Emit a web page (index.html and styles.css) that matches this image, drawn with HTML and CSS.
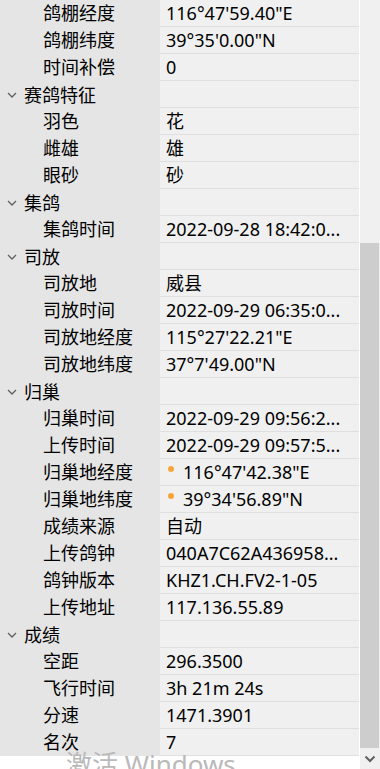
FILE: index.html
```html
<!DOCTYPE html>
<html lang="zh-CN">
<head>
    <meta charset="UTF-8">
    <meta name="viewport" content="width=device-width, initial-scale=1.0">
    <title>赛鸽属性</title>
    <link rel="stylesheet" href="styles.css">
</head>
<body>
    <div class="window">
        <div class="grid">
            <div class="row"><div class="name">鸽棚经度</div><div class="value">116°47'59.40"E</div></div>
            <div class="row"><div class="name">鸽棚纬度</div><div class="value">39°35'0.00"N</div></div>
            <div class="row"><div class="name">时间补偿</div><div class="value">0</div></div>

            <!-- 赛鸽特征 -->
            <div class="row cat"><div class="name"><svg class="chev" width="10" height="6" viewBox="0 0 10 6"><path d="M1 1 L5 5 L9 1"/></svg>赛鸽特征</div><div class="value"></div></div>
            <div class="row"><div class="name">羽色</div><div class="value">花</div></div>
            <div class="row"><div class="name">雌雄</div><div class="value">雄</div></div>
            <div class="row"><div class="name">眼砂</div><div class="value">砂</div></div>

            <!-- 集鸽 -->
            <div class="row cat"><div class="name"><svg class="chev" width="10" height="6" viewBox="0 0 10 6"><path d="M1 1 L5 5 L9 1"/></svg>集鸽</div><div class="value"></div></div>
            <div class="row"><div class="name">集鸽时间</div><div class="value">2022-09-28 18:42:0...</div></div>

            <!-- 司放 -->
            <div class="row cat"><div class="name"><svg class="chev" width="10" height="6" viewBox="0 0 10 6"><path d="M1 1 L5 5 L9 1"/></svg>司放</div><div class="value"></div></div>
            <div class="row"><div class="name">司放地</div><div class="value">威县</div></div>
            <div class="row"><div class="name">司放时间</div><div class="value">2022-09-29 06:35:0...</div></div>
            <div class="row"><div class="name">司放地经度</div><div class="value">115°27'22.21"E</div></div>
            <div class="row"><div class="name">司放地纬度</div><div class="value">37°7'49.00"N</div></div>

            <!-- 归巢 -->
            <div class="row cat"><div class="name"><svg class="chev" width="10" height="6" viewBox="0 0 10 6"><path d="M1 1 L5 5 L9 1"/></svg>归巢</div><div class="value"></div></div>
            <div class="row"><div class="name">归巢时间</div><div class="value">2022-09-29 09:56:2...</div></div>
            <div class="row"><div class="name">上传时间</div><div class="value">2022-09-29 09:57:5...</div></div>
            <div class="row"><div class="name">归巢地经度</div><div class="value"><span class="dot"></span>116°47'42.38"E</div></div>
            <div class="row"><div class="name">归巢地纬度</div><div class="value"><span class="dot"></span>39°34'56.89"N</div></div>
            <div class="row"><div class="name">成绩来源</div><div class="value">自动</div></div>
            <div class="row"><div class="name">上传鸽钟</div><div class="value">040A7C62A436958...</div></div>
            <div class="row"><div class="name">鸽钟版本</div><div class="value">KHZ1.CH.FV2-1-05</div></div>
            <div class="row"><div class="name">上传地址</div><div class="value">117.136.55.89</div></div>

            <!-- 成绩 -->
            <div class="row cat"><div class="name"><svg class="chev" width="10" height="6" viewBox="0 0 10 6"><path d="M1 1 L5 5 L9 1"/></svg>成绩</div><div class="value"></div></div>
            <div class="row"><div class="name">空距</div><div class="value">296.3500</div></div>
            <div class="row"><div class="name">飞行时间</div><div class="value">3h 21m 24s</div></div>
            <div class="row"><div class="name">分速</div><div class="value">1471.3901</div></div>
            <div class="row"><div class="name">名次</div><div class="value">7</div></div>
        </div>

        <div class="scrollbar">
            <div class="track"><div class="thumb"></div></div>
            <div class="arrow"><svg width="12" height="8" viewBox="0 0 12 8"><path d="M1.5 1.5 L6 6 L10.5 1.5"/></svg></div>
        </div>
    </div>

    <div class="watermark">激活 Windows</div>
</body>
</html>
```

FILE: styles.css
```css
/* General */
body {
    margin: 0;
    background: #fff;
    font-family: "Noto Sans", "Noto Sans CJK SC", sans-serif;
    font-size: 18px;
    color: #000;
    overflow: hidden;
}

.window {
    display: flex;
    width: 380px;
    height: 769px;
}

/* Property grid */
.grid {
    width: 359px;
    border-right: 1px solid #fff;
}

.row {
    display: flex;
    height: 27px;
}

.name {
    width: 160px;
    flex-shrink: 0;
    background: #e5e5e5;
    padding-left: 43px;
    box-sizing: border-box;
    line-height: 26px;
    white-space: nowrap;
}

.cat .name {
    display: flex;
    align-items: center;
    padding-left: 7px;
}

.chev {
    margin-right: 7px;
}

.chev path {
    fill: none;
    stroke: #606060;
    stroke-width: 1.3;
}

.value {
    flex: 1;
    background: #f0f0f0;
    border-bottom: 1px solid #dfdfdf;
    padding-left: 6px;
    line-height: 26px;
    white-space: nowrap;
    overflow: hidden;
}

.dot {
    display: inline-block;
    width: 6px;
    height: 6px;
    border-radius: 50%;
    background: #f9a53a;
    margin: 0 9px 0 2px;
    vertical-align: 7px;
}

/* Scrollbar */
.scrollbar {
    width: 20px;
    background: #f0f0f0;
    display: flex;
    flex-direction: column;
}

.track {
    flex: 1;
}

.thumb {
    margin-top: 243px;
    margin-right: 1px;
    height: 505px;
    background: #cdcdcd;
}

.arrow {
    height: 21px;
    display: flex;
    justify-content: center;
    align-items: center;
}

.arrow path {
    fill: none;
    stroke: #606060;
    stroke-width: 2;
}

/* Activation watermark */
.watermark {
    position: absolute;
    left: 66px;
    top: 747px;
    font-size: 26px;
    line-height: 34px;
    color: #b9b9b9;
    white-space: nowrap;
}
```
